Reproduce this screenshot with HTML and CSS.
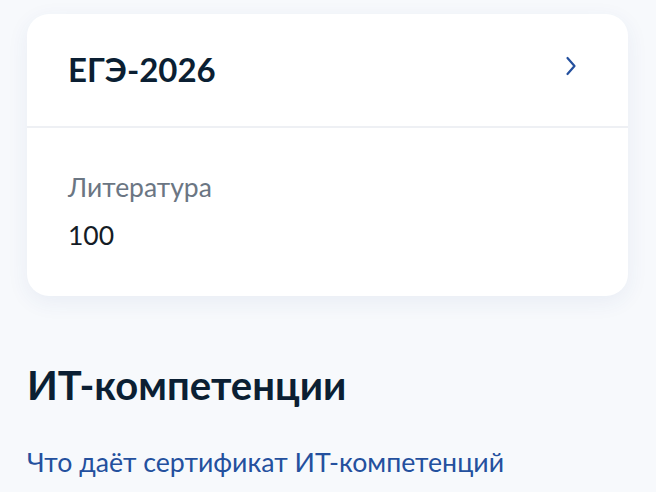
FILE: index.html
```html
<!DOCTYPE html>
<html lang="ru">

<head>
    <meta charset="UTF-8">
    <meta name="viewport" content="width=device-width, initial-scale=1.0">
    <title>ЕГЭ-2026</title>
    <link rel="stylesheet" href="styles.css">
</head>

<body>
    <div class="page">
        <div class="card">
            <a class="card-head" href="#">
                <span class="card-title">ЕГЭ-2026</span>
                <svg class="chevron" width="12" height="20" viewBox="0 0 12 20">
                    <path d="M2.5 2 L9.5 10 L2.5 18" fill="none" stroke="currentColor" stroke-width="2.2" stroke-linecap="round" stroke-linejoin="round"/>
                </svg>
            </a>
            <div class="card-body">
                <div class="label">Литература</div>
                <div class="value">100</div>
            </div>
        </div>

        <h2 class="section-title">ИТ-компетенции</h2>
        <a class="link" href="#">Что даёт сертификат ИТ-компетенций</a>
    </div>
</body>

</html>
```

FILE: styles.css
```css
* {
    box-sizing: border-box;
}

body {
    margin: 0;
    background-color: #f7f9fc;
    font-family: Lato, "Noto Sans", sans-serif;
    color: #0b1f33;
}

.page {
    padding: 14px 28px 0 27px;
}

.card {
    background-color: #fff;
    border-radius: 22px;
    box-shadow: 0 6px 22px rgb(40 70 140 / 7%);
}

.card-head {
    display: flex;
    align-items: center;
    justify-content: space-between;
    height: 114px;
    padding: 0 51px 0 41px;
    border-bottom: 2px solid #eef0f4;
    text-decoration: none;
    color: inherit;
}

.card-title {
    font-size: 33px;
    font-weight: 700;
    padding-bottom: 2px;
}

.chevron {
    color: #24509e;
    margin-top: -8px;
}

.card-body {
    height: 168px;
    padding: 43px 41px 0;
}

.label {
    font-size: 26.5px;
    color: #6b7683;
    line-height: 32px;
}

.value {
    font-size: 26.5px;
    color: #141c26;
    line-height: 32px;
    margin-top: 16px;
}

.section-title {
    margin: 65px 0 0;
    font-size: 40px;
    font-weight: 700;
    line-height: 48px;
}

.link {
    display: block;
    margin-top: 37px;
    font-size: 26.7px;
    color: #24509e;
    text-decoration: none;
}
```
